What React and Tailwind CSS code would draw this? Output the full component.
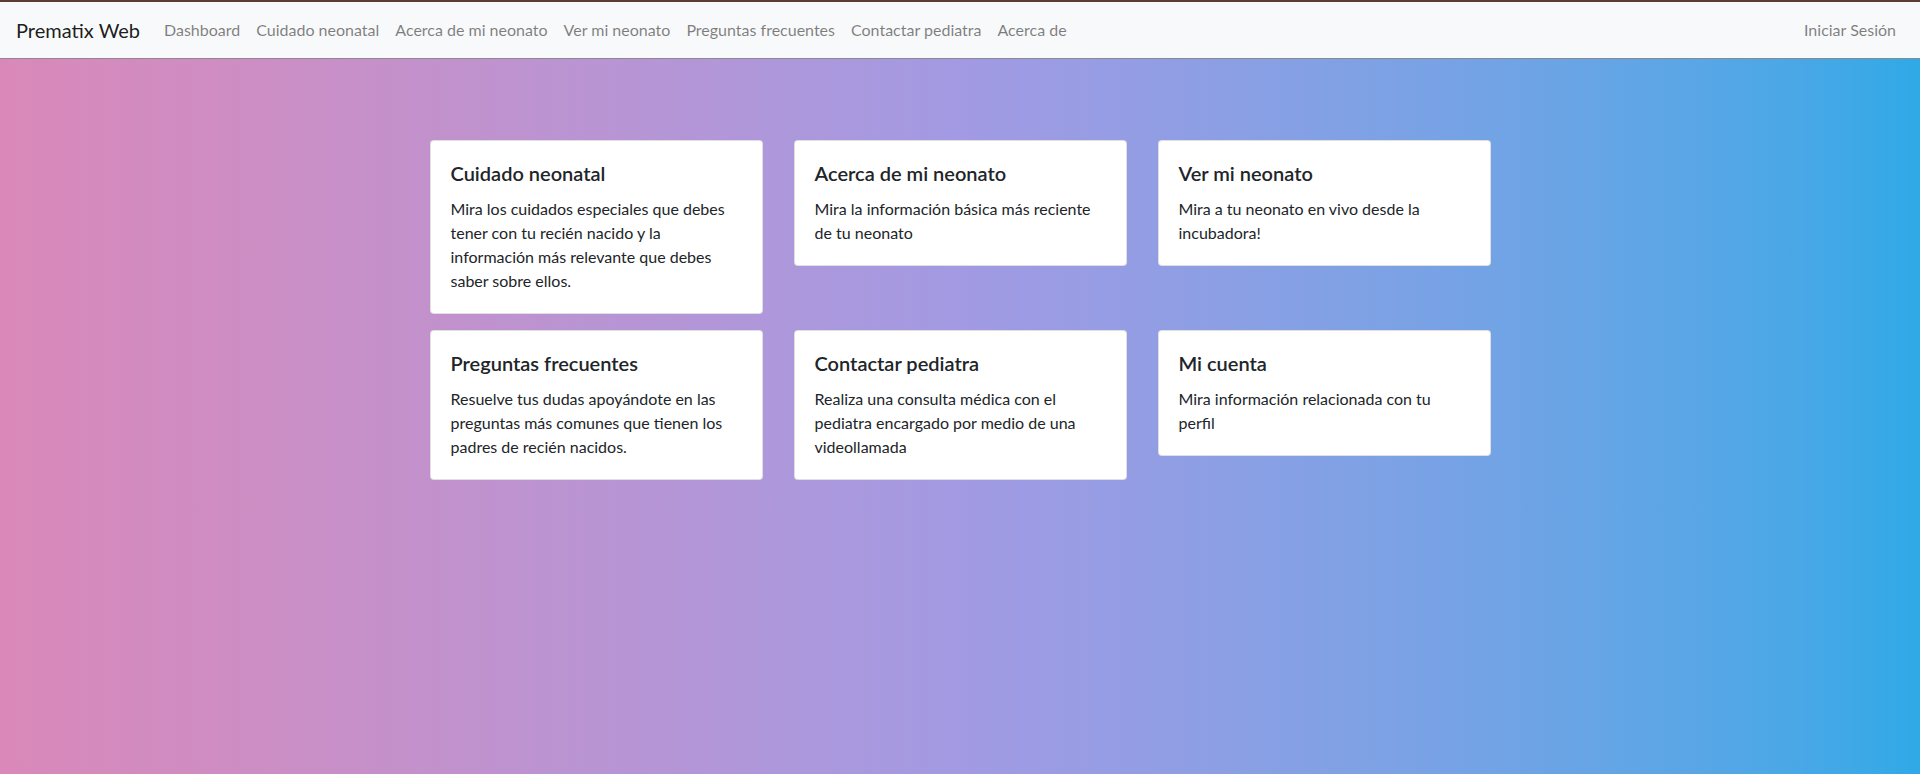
const links = [
  'Dashboard',
  'Cuidado neonatal',
  'Acerca de mi neonato',
  'Ver mi neonato',
  'Preguntas frecuentes',
  'Contactar pediatra',
  'Acerca de',
];

const cards = [
  {
    title: 'Cuidado neonatal',
    lines: [
      'Mira los cuidados especiales que debes',
      'tener con tu recién nacido y la',
      'información más relevante que debes',
      'saber sobre ellos.',
    ],
  },
  {
    title: 'Acerca de mi neonato',
    lines: ['Mira la información básica más reciente', 'de tu neonato'],
  },
  {
    title: 'Ver mi neonato',
    lines: ['Mira a tu neonato en vivo desde la', 'incubadora!'],
  },
  {
    title: 'Preguntas frecuentes',
    lines: [
      'Resuelve tus dudas apoyándote en las',
      'preguntas más comunes que tienen los',
      'padres de recién nacidos.',
    ],
  },
  {
    title: 'Contactar pediatra',
    lines: [
      'Realiza una consulta médica con el',
      'pediatra encargado por medio de una',
      'videollamada',
    ],
  },
  {
    title: 'Mi cuenta',
    lines: ['Mira información relacionada con tu', 'perfil'],
  },
];

function Card({ title, lines }) {
  return (
    <div className="rounded border border-black/[0.125] bg-white p-5">
      <h5 className="mb-3 text-[20px] font-semibold leading-[24px] text-[#212529]">{title}</h5>
      <p className="text-[16px] leading-6 text-[#212529]">
        {lines.map((l) => (
          <span key={l} className="block whitespace-nowrap">
            {l}
          </span>
        ))}
      </p>
    </div>
  );
}

export default function App() {
  return (
    <div className="flex min-h-[774px] flex-col font-['Segoe_UI',Lato,sans-serif]">
      <div className="h-[2px] bg-[#5b3d35]" />
      <nav className="flex h-[57px] items-center border-b border-[#8a8a8a] bg-[#f8f9fa] px-4">
        <a className="mr-4 py-[5px] text-[20px] leading-[30px] text-black/90">Prematix Web</a>
        <ul className="flex">
          {links.map((l) => (
            <li key={l}>
              <a className="block px-2 py-2 text-[16px] leading-6 text-black/50">{l}</a>
            </li>
          ))}
        </ul>
        <a className="ml-auto block px-2 py-2 text-[16px] leading-6 text-black/50">Iniciar Sesión</a>
      </nav>
      <main className="flex-1 bg-linear-to-r from-[#da88b9] via-[#a29ae3] to-[#2fa9e7] pt-[81px]">
        <div className="grid grid-cols-[333px_333px_333px] items-start justify-center gap-x-[31px] gap-y-4">
          {cards.map((c) => (
            <Card key={c.title} {...c} />
          ))}
        </div>
      </main>
    </div>
  );
}
